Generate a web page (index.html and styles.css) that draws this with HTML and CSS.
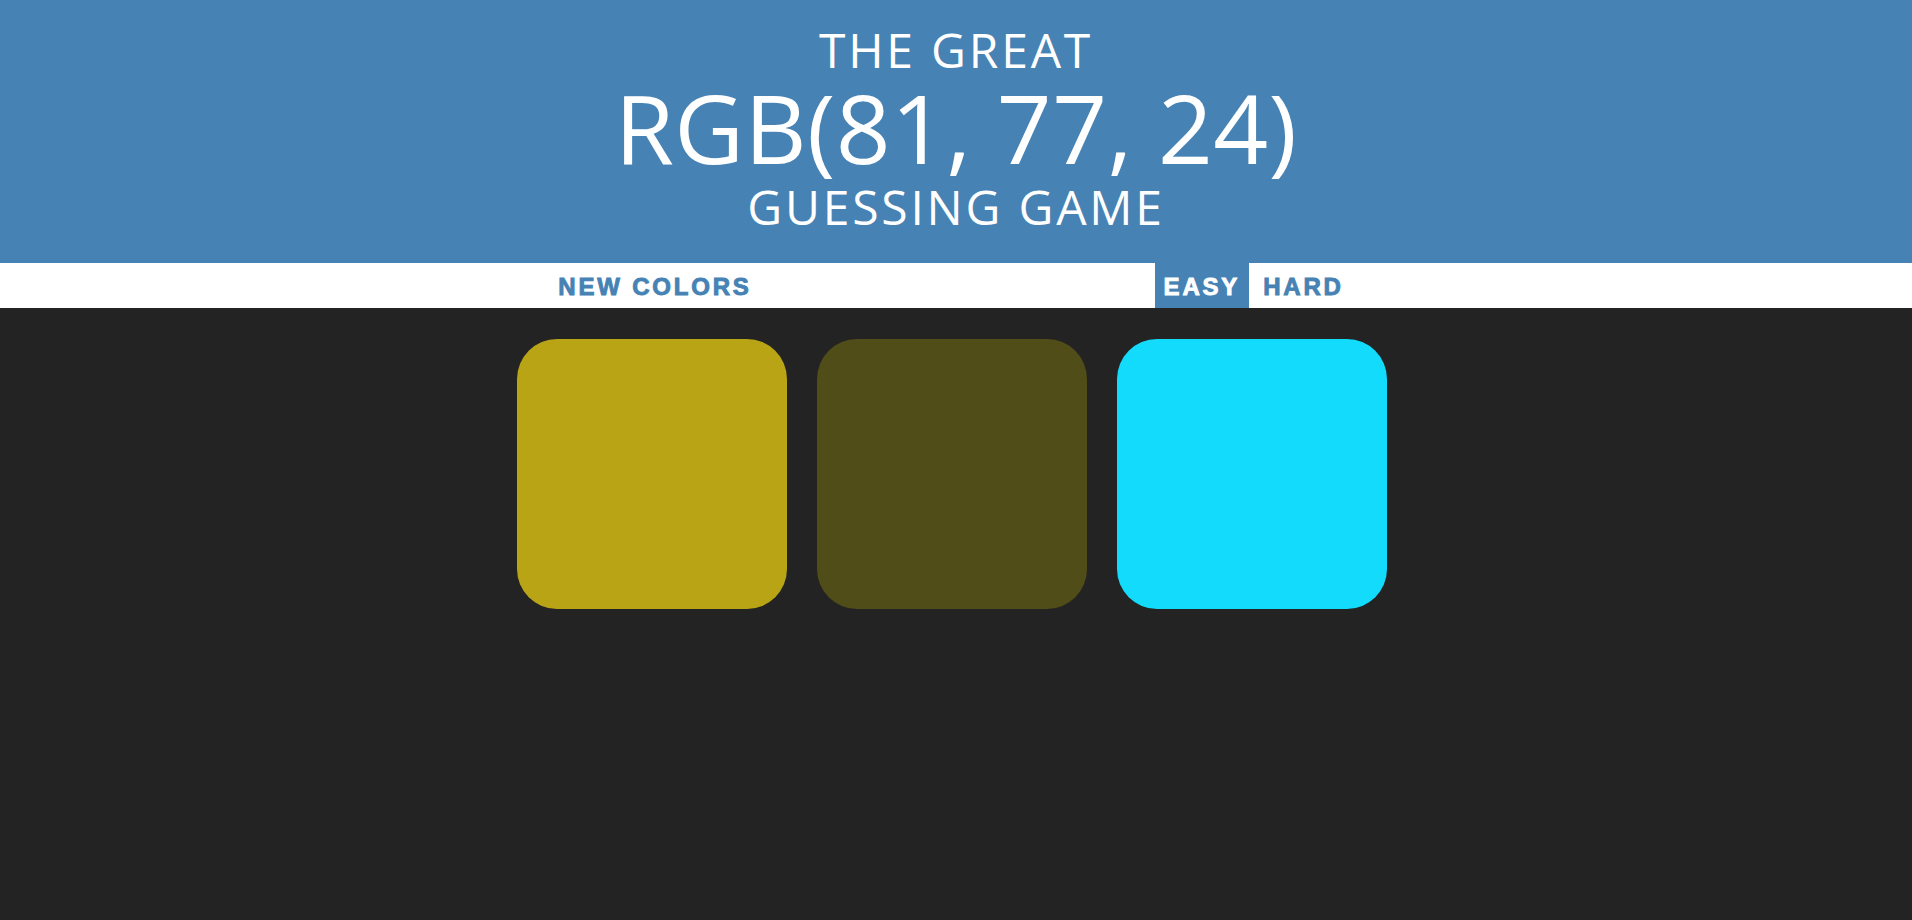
FILE: index.html
```html
<!DOCTYPE html>
<html lang="en">
<head>
<meta charset="utf-8">
<title>Color Game</title>
<link rel="stylesheet" href="styles.css">
</head>
<body>
<h1 class="title">
  <span class="title-line">The Great</span>
  <span class="title-line color-display">RGB(81, 77, 24)</span>
  <span class="title-line title-last">Guessing Game</span>
</h1>
<div class="stripe">
  <button class="btn reset">New Colors</button>
  <span class="message"></span>
  <button class="btn mode selected">Easy</button>
  <button class="btn mode mode-hard">Hard</button>
</div>
<div class="container">
  <div class="square sq1"></div>
  <div class="square sq2"></div>
  <div class="square sq3"></div>
</div>
</body>
</html>
```

FILE: styles.css
```css
html, body {
  margin: 0;
  padding: 0;
}
body {
  background: #232323;
  min-height: 100vh;
  font-family: "Open Sans", sans-serif;
}
.title {
  margin: 0;
  padding: 23px 0 28px;
  background: #4682b4;
  color: #ffffff;
  text-align: center;
  font-weight: 370;
  text-transform: uppercase;
  font-family: "Open Sans", sans-serif;
  font-size: 48px;
  letter-spacing: 2.8px;
}
.title-line {
  display: block;
  line-height: 53px;
}
.color-display {
  font-size: 96px;
  line-height: 102px;
  letter-spacing: 0.4px;
}
.title-last {
  line-height: 57px;
}
.stripe {
  display: flex;
  justify-content: center;
  height: 45px;
  padding-right: 10px;
  background: #ffffff;
}
.btn {
  height: 100%;
  margin: 0;
  padding: 3px 9px 0;
  border: none;
  background: none;
  color: #4682b4;
  font-family: "Liberation Sans", Arial, sans-serif;
  font-weight: 700;
  font-size: 24px;
  letter-spacing: 2.8px;
  -webkit-text-stroke: 0.9px currentColor;
  text-transform: uppercase;
  outline: none;
}
.message {
  width: 381px;
  margin: 0 6.5px;
}
.mode-hard {
  margin-left: 5px;
}
.selected {
  background: #4682b4;
  color: #ffffff;
}
.container {
  display: flex;
  gap: 30px;
  width: 870px;
  padding: 0 15px;
  margin: 31px 0 0 calc(50% - 454px);
}
.square {
  width: 270px;
  height: 270px;
  border-radius: 40px;
}
.sq1 { background: #b9a416; }
.sq2 { background: #514d18; }
.sq3 { background: #12dbfc; }
```
